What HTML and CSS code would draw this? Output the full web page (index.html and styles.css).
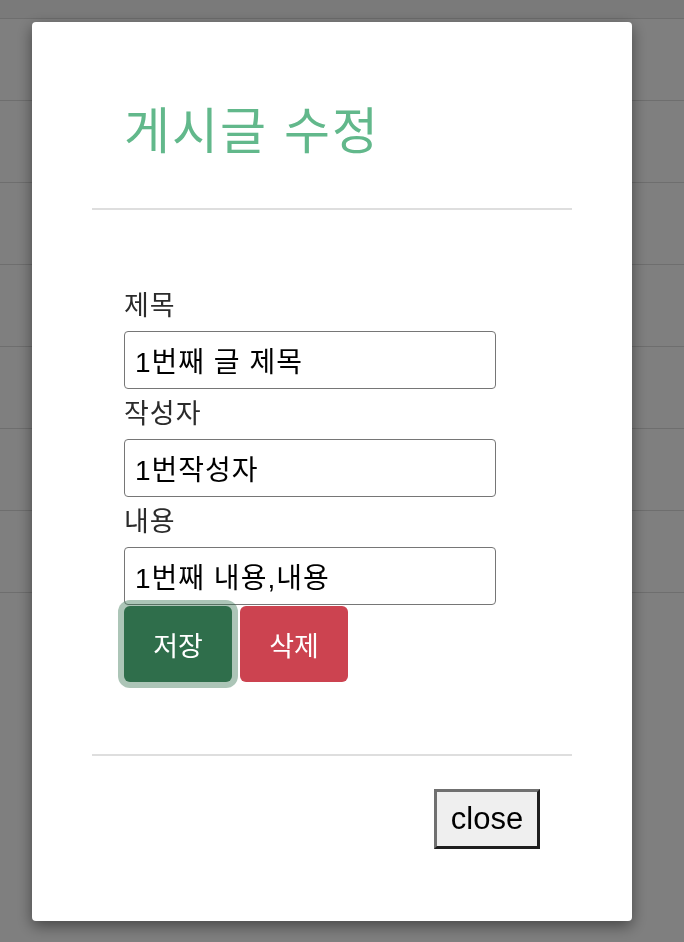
FILE: index.html
```html
<!DOCTYPE html>
<html lang="ko">
<head>
    <meta charset="UTF-8">
    <meta name="viewport" content="width=device-width, initial-scale=1.0">
    <title>게시글 수정</title>
    <link rel="stylesheet" href="styles.css">
</head>
<body>
    <div class="board">
        <div class="board-head"></div>
        <div class="board-row"></div>
        <div class="board-row"></div>
        <div class="board-row"></div>
        <div class="board-row"></div>
        <div class="board-row"></div>
        <div class="board-row"></div>
        <div class="board-row"></div>
    </div>

    <div class="overlay">
        <div class="modal">
            <div class="modal-header">
                <h1 class="modal-title">게시글 수정</h1>
            </div>
            <hr class="divider">
            <div class="modal-body">
                <form class="edit-form">
                    <label for="title">제목</label>
                    <input type="text" id="title" value="1번째 글 제목">
                    <label for="writer">작성자</label>
                    <input type="text" id="writer" value="1번작성자">
                    <label for="content">내용</label>
                    <input type="text" id="content" value="1번째 내용,내용">
                    <div class="actions">
                        <button type="button" class="btn btn-save">저장</button>
                        <button type="button" class="btn btn-delete">삭제</button>
                    </div>
                </form>
            </div>
            <hr class="divider">
            <div class="modal-footer">
                <button type="button" class="btn-close">close</button>
            </div>
        </div>
    </div>
</body>
</html>
```

FILE: styles.css
```css
body {
    margin: 0;
    padding: 0;
    background: #fff;
    font-family: "Liberation Sans", "Noto Sans CJK KR", sans-serif;
    color: #333;
}
.board-head {
    height: 18px;
    background: #f4f4f4;
    border-bottom: 1px solid #dcdcdc;
}
.board-row {
    height: 81px;
    border-bottom: 1px solid #dcdcdc;
}
.overlay {
    position: fixed;
    top: 0;
    left: 0;
    right: 0;
    bottom: 0;
    background-color: rgba(0, 0, 0, 0.5);
}
.modal {
    position: absolute;
    top: 22px;
    left: 32px;
    width: 600px;
    padding: 0 60px;
    box-sizing: border-box;
    background-color: #fff;
    border-radius: 4px;
    box-shadow: 0 5px 15px rgba(0, 0, 0, 0.45);
}
.modal-header {
    padding: 85px 32px 51px;
}
.modal-title {
    margin: 0;
    font-size: 50px;
    line-height: 50px;
    font-weight: normal;
    letter-spacing: 2px;
    color: #62b88b;
}
.divider {
    margin: 0;
    height: 2px;
    border: none;
    background-color: #dedede;
}
.modal-body {
    padding: 71px 32px 72px;
}
.edit-form label {
    display: block;
    height: 50px;
    line-height: 50px;
    font-size: 27px;
    letter-spacing: 1px;
    color: #2b2b2b;
}
.edit-form input[type="text"] {
    display: block;
    width: 372px;
    height: 58px;
    box-sizing: border-box;
    padding: 0 10px;
    border: 1px solid #767676;
    border-radius: 4px;
    font-family: "Liberation Sans", "Noto Sans CJK KR", sans-serif;
    font-size: 28px;
    letter-spacing: 1px;
    color: #000;
}
.actions {
    display: flex;
    gap: 8px;
    margin-top: 1px;
}
.btn {
    width: 108px;
    height: 76px;
    padding: 0;
    border: none;
    border-radius: 6px;
    font-family: "Liberation Sans", "Noto Sans CJK KR", sans-serif;
    font-size: 27px;
    color: #fff;
}
.btn-save {
    background-color: #2f6e4b;
    box-shadow: 0 0 0 6px rgba(47, 110, 75, 0.4);
}
.btn-delete {
    background-color: #cc4350;
}
.modal-footer {
    display: flex;
    justify-content: flex-end;
    padding: 33px 32px 72px;
}
.btn-close {
    width: 106px;
    height: 60px;
    padding: 0;
    background-color: #efefef;
    border: 3px solid;
    border-color: #707070 #1e1e1e #1e1e1e #707070;
    font-family: "Liberation Sans", sans-serif;
    font-size: 31px;
    color: #000;
}
```
